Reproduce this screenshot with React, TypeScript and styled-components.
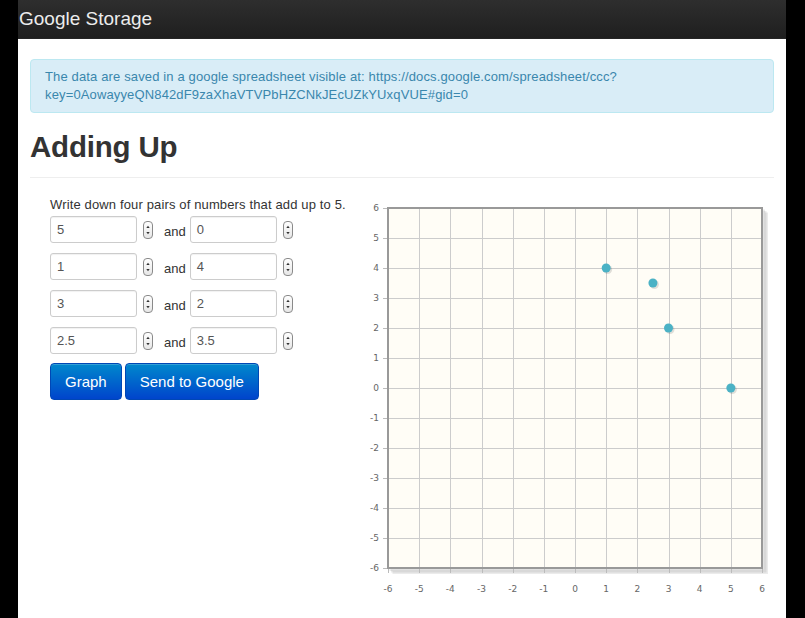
import React from "react";
import styled, { createGlobalStyle } from "styled-components";

const Global = createGlobalStyle`
  html, body { margin: 0; padding: 0; background: #000; }
  body { font-family: "Liberation Sans", Arial, sans-serif; }
  * { box-sizing: border-box; }
`;

const Page = styled.div`
  width: 768px;
  min-height: 100vh;
  margin: 0 19px 0 18px;
  background: #fff;
  display: flex;
  flex-direction: column;
`;

const NavBar = styled.header`
  height: 39px;
  background: linear-gradient(to bottom, #2e2e2e, #1f1f1f);
  display: flex;
  align-items: center;
  padding-left: 1px;
  border-bottom: 1px solid #252525;
`;

const Brand = styled.span`
  color: #ececec;
  font-size: 19px;
  font-weight: 300;
`;

const Content = styled.main`
  padding: 20px 12px 0;
  display: flex;
  flex-direction: column;
`;

const Alert = styled.div`
  background: #d9edf7;
  border: 1px solid #bce8f1;
  border-radius: 4px;
  color: #3a87ad;
  font-size: 13px;
  letter-spacing: 0.14px;
  line-height: 18px;
  padding: 8px 35px 8px 14px;
`;

const Header = styled.div`
  margin-top: 16px;
  padding-bottom: 12px;
  border-bottom: 1px solid #eee;
`;

const Title = styled.h1`
  margin: 0;
  font-size: 29.5px;
  line-height: 36px;
  font-weight: bold;
  color: #333;
  letter-spacing: -0.2px;
`;

const Body = styled.div`
  display: flex;
  margin-top: 18px;
`;

const LeftCol = styled.div`
  flex: 0 0 330px;
  padding-left: 20px;
  display: flex;
  flex-direction: column;
`;

const Instructions = styled.p`
  margin: 0;
  font-size: 13px;
  letter-spacing: 0.14px;
  line-height: 18px;
  color: #333;
`;

const Rows = styled.div`
  display: flex;
  flex-direction: column;
  gap: 10px;
  margin-top: 2px;
`;

const Row = styled.div`
  display: flex;
  align-items: center;
`;

const NumberBox = styled.div`
  width: 87px;
  height: 27px;
  border: 1px solid #ccc;
  border-radius: 3px;
  box-shadow: inset 0 1px 1px rgba(0, 0, 0, 0.06);
  padding: 0 6px;
  display: flex;
  align-items: center;
  font-size: 13px;
  color: #555;
`;

const SpinnerWrap = styled.span`
  display: inline-flex;
  margin-left: 6px;
`;

const AndLabel = styled.span`
  font-size: 13px;
  color: #333;
  margin: 0 4px 0 11px;
  padding-top: 4px;
`;

const Buttons = styled.div`
  display: flex;
  gap: 3px;
  margin-top: 9px;
`;

const PrimaryButton = styled.button`
  height: 37px;
  padding: 0 14px;
  border: 1px solid #0047b5;
  border-radius: 4px;
  background: linear-gradient(to bottom, #0088cc, #0044cc);
  color: #fff;
  font-family: "Liberation Sans", Arial, sans-serif;
  font-size: 15px;
  box-shadow: inset 0 1px 0 rgba(255, 255, 255, 0.2);
`;

const ChartWrap = styled.div`
  flex: 0 0 auto;
`;

const Spinner = () => (
  <SpinnerWrap>
    <svg width="10" height="18" viewBox="0 0 10 18">
      <defs>
        <linearGradient id="spg" x1="0" y1="0" x2="0" y2="1">
          <stop offset="0" stopColor="#ffffff" />
          <stop offset="1" stopColor="#e6e6e6" />
        </linearGradient>
      </defs>
      <rect x="0.5" y="0.5" width="9" height="17" rx="3.5" fill="url(#spg)" stroke="#8a8a8a" />
      <path d="M3.3 7 L5 4.8 L6.7 7 Z" fill="#333" />
      <path d="M3.3 11 L5 13.2 L6.7 11 Z" fill="#333" />
    </svg>
  </SpinnerWrap>
);

const pairs: [string, string][] = [
  ["5", "0"],
  ["1", "4"],
  ["3", "2"],
  ["2.5", "3.5"],
];

const PX0 = 28;
const PY0 = 12;
const PW = 374;
const PH = 360;
const xs = (v: number) => PX0 + ((v + 6) / 12) * PW;
const ys = (v: number) => PY0 + ((6 - v) / 12) * PH;
const crisp = (n: number) => Math.round(n) + 0.5;

const Chart = () => {
  const ticks = Array.from({ length: 13 }, (_, i) => i - 6);
  const points = pairs.map(([a, b]) => [parseFloat(a), parseFloat(b)]);
  return (
    <svg width="415" height="410" viewBox="0 0 415 410">
      {[1.5, 3, 4.5].map((o) => (
        <polyline
          key={o}
          points={`${PX0 + PW + o},${PY0 + o} ${PX0 + PW + o},${PY0 + PH + o} ${PX0 + o},${PY0 + PH + o}`}
          fill="none"
          stroke="rgba(0,0,0,0.08)"
          strokeWidth="3"
        />
      ))}
      <rect x={PX0} y={PY0} width={PW} height={PH} fill="#fffdf6" />
      {ticks.map((t) => (
        <g key={`g${t}`}>
          <line x1={crisp(xs(t))} y1={PY0} x2={crisp(xs(t))} y2={PY0 + PH} stroke="#cccccc" strokeWidth="1" />
          <line x1={PX0} y1={crisp(ys(t))} x2={PX0 + PW} y2={crisp(ys(t))} stroke="#cccccc" strokeWidth="1" />
          <line x1={PX0 - 5} y1={crisp(ys(t))} x2={PX0} y2={crisp(ys(t))} stroke="#bbbbbb" strokeWidth="1" />
          <line x1={crisp(xs(t))} y1={PY0 + PH} x2={crisp(xs(t))} y2={PY0 + PH + 5} stroke="#bbbbbb" strokeWidth="1" />
          <text
            x={PX0 - 9}
            y={ys(t) + 3}
            textAnchor="end"
            fontSize="9"
            fill="#666"
            fontFamily="'DejaVu Sans', sans-serif"
          >
            {t}
          </text>
          <text
            x={xs(t)}
            y={PY0 + PH + 24}
            textAnchor="middle"
            fontSize="9"
            fill="#666"
            fontFamily="'DejaVu Sans', sans-serif"
          >
            {t}
          </text>
        </g>
      ))}
      <rect x={PX0} y={PY0} width={PW} height={PH} fill="none" stroke="#999999" strokeWidth="2" />
      {points.map(([x, y], i) => (
        <g key={`p${i}`}>
          <circle cx={xs(x) + 1.5} cy={ys(y) + 1.5} r="4.5" fill="rgba(0,0,0,0.12)" />
          <circle cx={xs(x)} cy={ys(y)} r="4.5" fill="#4bb2c5" />
        </g>
      ))}
    </svg>
  );
};

export default function App() {
  return (
    <>
      <Global />
      <Page>
        <NavBar>
          <Brand>Google Storage</Brand>
        </NavBar>
        <Content>
          <Alert>
            The data are saved in a google spreadsheet visible at: https://docs.google.com/spreadsheet/ccc?
            <br />
            key=0AowayyeQN842dF9zaXhaVTVPbHZCNkJEcUZkYUxqVUE#gid=0
          </Alert>
          <Header>
            <Title>Adding Up</Title>
          </Header>
          <Body>
            <LeftCol>
              <Instructions>Write down four pairs of numbers that add up to 5.</Instructions>
              <Rows>
                {pairs.map(([a, b], i) => (
                  <Row key={i}>
                    <NumberBox>{a}</NumberBox>
                    <Spinner />
                    <AndLabel>and</AndLabel>
                    <NumberBox>{b}</NumberBox>
                    <Spinner />
                  </Row>
                ))}
              </Rows>
              <Buttons>
                <PrimaryButton>Graph</PrimaryButton>
                <PrimaryButton>Send to Google</PrimaryButton>
              </Buttons>
            </LeftCol>
            <ChartWrap>
              <Chart />
            </ChartWrap>
          </Body>
        </Content>
      </Page>
    </>
  );
}
